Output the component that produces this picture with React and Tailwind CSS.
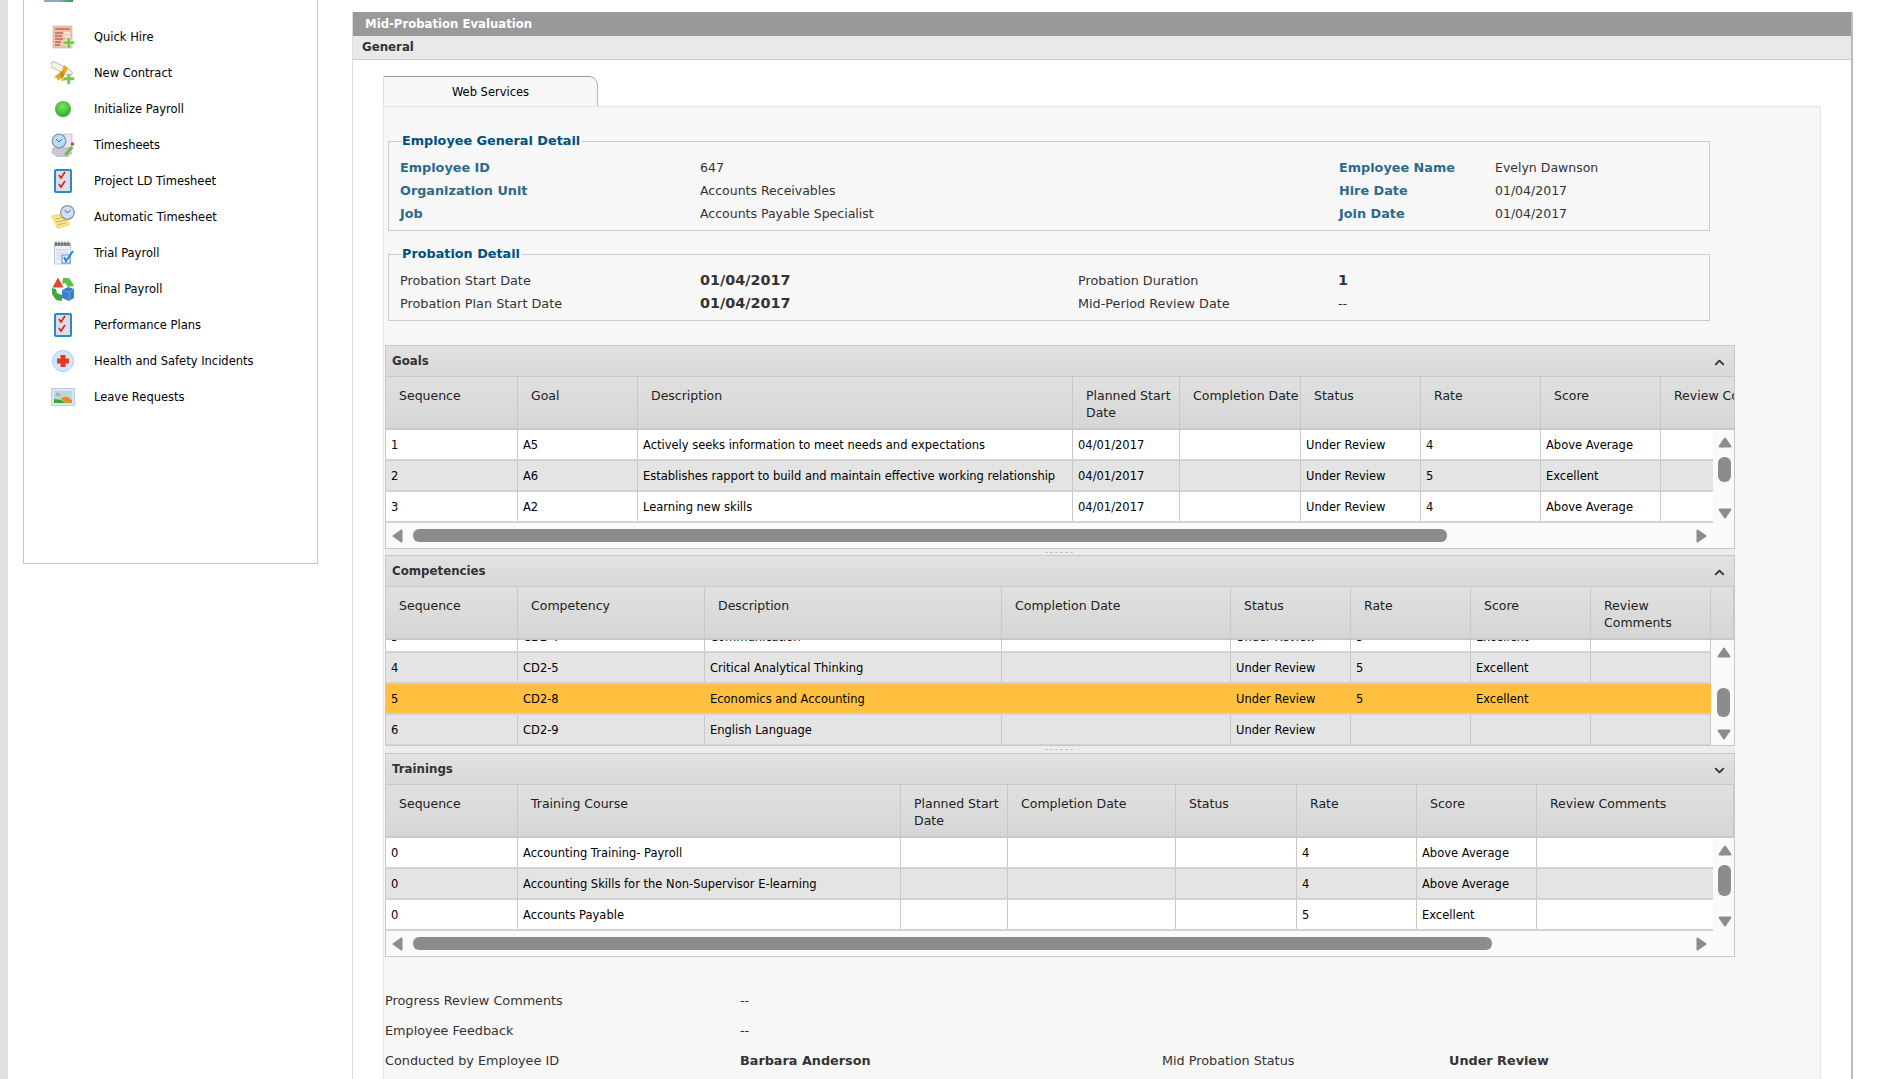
import { ChevronUp, ChevronDown } from "lucide-react"

const menu = [
  ["Quick Hire", "hire"],
  ["New Contract", "contract"],
  ["Initialize Payroll", "dot"],
  ["Timesheets", "sheets"],
  ["Project LD Timesheet", "check"],
  ["Automatic Timesheet", "auto"],
  ["Trial Payroll", "trial"],
  ["Final Payroll", "final"],
  ["Performance Plans", "check"],
  ["Health and Safety Incidents", "health"],
  ["Leave Requests", "leave"],
]

const Plus = () => (
  <path d="M16 12.5h3.5V16H23.5v3.5H19.5V23.5H16V19.5h-4V16h4z" fill="#74c94c" stroke="#fff" strokeWidth="0.6" />
)

const MenuIcon = ({ name }) => {
  if (name === "hire")
    return (
      <svg width="24" height="24" viewBox="0 0 24 24">
        <rect x="2" y="1" width="19" height="22" fill="#eec3ac" stroke="#cfa893" strokeWidth="0.6" />
        <path d="M4 4h15M4 8h8M4 11h7M4 14h8M4 17h6M4 20h5" stroke="#a8322a" strokeWidth="1" />
        <path d="M13 8h6M13 11h6" stroke="#fff" strokeWidth="1" />
        <Plus />
      </svg>
    )
  if (name === "contract")
    return (
      <svg width="24" height="24" viewBox="0 0 24 24">
        <path d="M3 4l15 8" stroke="#a9a595" strokeWidth="7" strokeLinecap="round" />
        <path d="M3 4l15 8" stroke="#f6f3e8" strokeWidth="5.5" strokeLinecap="round" />
        <path d="M13 4l-2 6-8 6 3 1 1 3 7-7 3-6z" fill="#e0a916" />
        <path d="M9 11l2 9 3 0-2-10z" fill="#c48d0c" />
        <Plus />
      </svg>
    )
  if (name === "dot")
    return (
      <svg width="24" height="24" viewBox="0 0 24 24">
        <defs>
          <radialGradient id="dot-g" cx="0.45" cy="0.35" r="0.7">
            <stop offset="0" stopColor="#7fe36a" />
            <stop offset="1" stopColor="#27a81f" />
          </radialGradient>
        </defs>
        <circle cx="12" cy="12" r="8" fill="url(#dot-g)" />
      </svg>
    )
  if (name === "sheets")
    return (
      <svg width="24" height="24" viewBox="0 0 24 24">
        <path d="M2 15h16l3 5-4 3.5H6L1 20z" fill="#c9c9d6" stroke="#9a9ab0" strokeWidth="0.5" />
        <path d="M12 1h9v14h-9z" fill="#e6e6ee" stroke="#a5a5bd" strokeWidth="0.6" />
        <circle cx="8" cy="8" r="6.8" fill="#bcdcf5" stroke="#8d95b5" strokeWidth="1.3" />
        <path d="M5 6l3 3 3-3" fill="none" stroke="#5a6a90" strokeWidth="1" />
        <path d="M13 21l7-8 2.5 2-7 8z" fill="#76b84a" />
        <circle cx="21.5" cy="11" r="1.8" fill="#d8473a" />
      </svg>
    )
  if (name === "check")
    return (
      <svg width="24" height="24" viewBox="0 0 24 24">
        <rect x="4" y="1" width="16" height="22" rx="1" fill="#dedede" stroke="#2d86d0" strokeWidth="2" />
        <path d="M8 6l2 3 4-6M8 15l2 3 4-6" fill="none" stroke="#c9261c" strokeWidth="1.6" />
      </svg>
    )
  if (name === "auto")
    return (
      <svg width="24" height="24" viewBox="0 0 24 24">
        <path d="M0.5 11l14-3 4 12-12 3.5z" fill="#f6e58c" stroke="#d9c35a" strokeWidth="0.5" />
        <path d="M4 14l10-2M5 17l10-2M6 20l9-2" stroke="#c6a93a" strokeWidth="0.8" />
        <circle cx="16.5" cy="7.5" r="6.8" fill="#cfe0f3" stroke="#8d95a8" strokeWidth="1.3" />
        <path d="M13.5 5l3 3 3-3" fill="none" stroke="#4c5a78" strokeWidth="1" />
      </svg>
    )
  if (name === "trial")
    return (
      <svg width="24" height="24" viewBox="0 0 24 24">
        <rect x="3.5" y="2" width="16" height="21" fill="#eef1fa" stroke="#a9b2cc" strokeWidth="0.7" />
        <path d="M3.5 2h16v3h-16z" fill="#9a9a9a" />
        <path d="M5 9h12M5 12h12M5 15h8M5 18h8" stroke="#b9c4e2" strokeWidth="0.8" />
        <path d="M5 0.5v4M8 0.5v4M11 0.5v4M14 0.5v4M17 0.5v4" stroke="#444" strokeWidth="0.9" />
        <rect x="11" y="14" width="8" height="8" fill="#fff" stroke="#2a75c9" strokeWidth="0.8" />
        <path d="M13 16l2 4 7-10" fill="none" stroke="#1f86e0" strokeWidth="2" />
      </svg>
    )
  if (name === "final")
    return (
      <svg width="24" height="24" viewBox="0 0 24 24">
        <path d="M7 0.5l5.5 10H1.5z" fill="#e2462b" />
        <path d="M12 1h6l4 6 1 2-6 1-3-4-3 1z" fill="#5fbf4d" />
        <path d="M1 11l4 1 1 4 5 2v6l-6-1-4-6z" fill="#3fa83c" />
        <path d="M11 13l6-3 6 2v9l-5 3-7-3z" fill="#3d7fcb" />
        <path d="M11 13l7 2.5 5-3.5M18 15.5v8" fill="none" stroke="#7cb0e8" strokeWidth="0.7" />
      </svg>
    )
  if (name === "health")
    return (
      <svg width="24" height="24" viewBox="0 0 24 24">
        <circle cx="12" cy="12" r="10.5" fill="#cfe6fb" stroke="#a8cdf0" strokeWidth="1" />
        <path d="M9.5 6h5v3.5H18v5h-3.5V18h-5v-3.5H6v-5h3.5z" fill="#e8391f" />
      </svg>
    )
  return (
    <svg width="24" height="24" viewBox="0 0 24 24">
      <rect x="0.5" y="3.5" width="23" height="17" fill="#dbe5f5" stroke="#bcd0ea" />
      <rect x="3" y="6" width="18" height="12" fill="#bcd7d9" />
      <path d="M3 14l7 1 5 3H3z" fill="#3fa52c" />
      <path d="M10 14c2-3 7-3 9 0l2 1v3h-5z" fill="#e88a27" />
      <path d="M5 8l5 2M5 10l3 1" stroke="#777" strokeWidth="0.6" />
    </svg>
  )
}

const Triangle = ({ dir }) => {
  if (dir === "up")
    return (
      <svg width="14" height="11" viewBox="0 0 14 11" className="shrink-0">
        <path d="M7 1.5L12.5 9.5H1.5z" fill="#8c8c8c" stroke="#8c8c8c" strokeWidth="2" strokeLinejoin="round" />
      </svg>
    )
  if (dir === "down")
    return (
      <svg width="14" height="11" viewBox="0 0 14 11" className="shrink-0">
        <path d="M7 9.5L12.5 1.5H1.5z" fill="#8c8c8c" stroke="#8c8c8c" strokeWidth="2" strokeLinejoin="round" />
      </svg>
    )
  if (dir === "left")
    return (
      <svg width="11" height="14" viewBox="0 0 11 14" className="shrink-0">
        <path d="M1.5 7L9.5 1.5V12.5z" fill="#8c8c8c" stroke="#8c8c8c" strokeWidth="2" strokeLinejoin="round" />
      </svg>
    )
  return (
    <svg width="11" height="14" viewBox="0 0 11 14" className="shrink-0">
      <path d="M9.5 7L1.5 1.5V12.5z" fill="#8c8c8c" stroke="#8c8c8c" strokeWidth="2" strokeLinejoin="round" />
    </svg>
  )
}

const GridHeader = ({ cols, labels }) => (
  <div className={`grid h-[53px] overflow-hidden border-b-2 border-[#c8c8c8] bg-gradient-to-b from-[#e0e0e0] to-[#d6d6d6] text-[12.5px] text-[#222] leading-[17px] ${cols}`}>
    {labels.map((label, i) => (
      <div key={i} className="whitespace-nowrap border-r border-[#c8c8c8] pl-[13px] pt-[10px]">
        {label}
      </div>
    ))}
  </div>
)

const GridRows = ({ cols, rows, selected }) => (
  <div className="text-[11.5px] text-black">
    {rows.map((row, r) => (
      <div
        key={r}
        className={`grid h-[31px] border-b-2 border-[#d2d2d2] ${cols} ${
          r === selected ? "bg-[#ffbf3f]" : r % 2 ? "bg-[#e4e4e4]" : "bg-white"
        }`}
      >
        {row.map((cell, i) => (
          <div key={i} className={`flex items-center overflow-hidden whitespace-nowrap border-r pl-[5px] pt-[2px] ${r === selected ? "border-transparent" : "border-[#c8c8c8]"}`}>
            {cell}
          </div>
        ))}
      </div>
    ))}
  </div>
)

const VScroll = ({ upGap, thumb, downGap }) => (
  <div className="flex flex-1 flex-col items-center bg-[#fafafa] pl-[2px]">
    <div className={upGap}><Triangle dir="up" /></div>
    <div className={`w-[13px] shrink-0 rounded-[6px] bg-[#8c8c8c] ${thumb}`} />
    <div className={downGap}><Triangle dir="down" /></div>
  </div>
)

const HScroll = ({ thumb }) => (
  <div className="flex h-[23px] items-center bg-[#fafafa] pb-[2px] pl-[6px] pr-[27px]">
    <Triangle dir="left" />
    <div className={`ml-[10px] h-[13px] rounded-[6px] bg-[#8c8c8c] ${thumb}`} />
    <div className="ml-auto"><Triangle dir="right" /></div>
  </div>
)

const PanelHead = ({ title, open }) => (
  <div className="flex h-[31px] items-center justify-between border-b border-[#c8c8c8] bg-gradient-to-b from-[#e2e2e2] to-[#d8d8d8] pl-[6px] pr-[7px] pt-[2px]">
    <span className="text-[11.8px] font-bold text-[#333]">{title}</span>
    {open ? <ChevronUp size={15} strokeWidth={3} className="text-[#333]" /> : <ChevronDown size={15} strokeWidth={3} className="text-[#333]" />}
  </div>
)

const Splitter = ({ h }) => (
  <div className={`flex w-[1350px] items-center justify-center bg-[#ececec] pr-[3px] ${h}`}>
    <div className="h-0 w-[28px] border-t border-dashed border-[#c4c4c4]" />
  </div>
)

const goalCols = "grid-cols-[132px_120px_435px_107px_121px_120px_120px_120px_120px]"
const compCols = "grid-cols-[132px_187px_297px_229px_120px_120px_120px_120px_1fr]"
const trainCols = "grid-cols-[132px_383px_107px_168px_121px_120px_120px_197px]"

const plannedStart = <>Planned Start<br />Date</>

const goalRows = [
  ["1", "A5", "Actively seeks information to meet needs and expectations", "04/01/2017", "", "Under Review", "4", "Above Average", ""],
  ["2", "A6", "Establishes rapport to build and maintain effective working relationship", "04/01/2017", "", "Under Review", "5", "Excellent", ""],
  ["3", "A2", "Learning new skills", "04/01/2017", "", "Under Review", "4", "Above Average", ""],
]

const compRows = [
  ["3", "CD2-4", "Communication", "", "Under Review", "5", "Excellent", ""],
  ["4", "CD2-5", "Critical Analytical Thinking", "", "Under Review", "5", "Excellent", ""],
  ["5", "CD2-8", "Economics and Accounting", "", "Under Review", "5", "Excellent", ""],
  ["6", "CD2-9", "English Language", "", "Under Review", "", "", ""],
]

const trainRows = [
  ["0", "Accounting Training- Payroll", "", "", "", "4", "Above Average", ""],
  ["0", "Accounting Skills for the Non-Supervisor E-learning", "", "", "", "4", "Above Average", ""],
  ["0", "Accounts Payable", "", "", "", "5", "Excellent", ""],
]

const blueLabel = "text-[12.8px] font-bold text-[#2d6a8a]"
const legend = "ml-[2px] h-[20px] pr-[2px] text-[12.8px] font-bold leading-[20px] text-[#00507f]"

export default function App() {
  return (
    <div className="flex h-[1079px] w-[1891px] overflow-hidden bg-white font-['DejaVu_Sans',sans-serif] text-[#333]">
      <div className="w-[8px] shrink-0 bg-[#e0e0e0]" />

      <aside className="ml-[15px] h-[564px] w-[295px] shrink-0 border-x border-b border-[#c8c8c8]">
        <div className="ml-[20px] h-[2px] w-[29px] bg-gradient-to-r from-[#8fa5c4] via-[#8fa5c4] to-[#2c9c3c]" />
        <ul className="pt-[17px]">
          {menu.map(([label, icon]) => (
            <li key={label} className="flex h-[36px] items-center gap-[19px] pl-[27px] text-[11.5px] text-black">
              <MenuIcon name={icon} />
              <span className="pt-[1px]">{label}</span>
            </li>
          ))}
        </ul>
      </aside>

      <main className="ml-[34px] mt-[12px] w-[1501px] shrink-0 border-l border-r-2 border-l-[#ddd] border-r-[#bbb]">
        <div className="flex h-[24px] items-center bg-[#999] pl-[12px] pt-[1px] text-[11.7px] font-bold text-white">Mid-Probation Evaluation</div>
        <div className="flex h-[24px] items-center border-b border-[#ccc] bg-[#e9e9e9] pl-[9px] pt-[1px] text-[11.8px] font-bold text-[#333]">General</div>

        <div className="pl-[30px] pt-[16px]">
          <div className="flex h-[30px] w-[215px] items-center justify-center rounded-tr-[9px] border-x border-t border-x-[#b5b5b5] border-t-[#999] border-l-[#ddd] bg-[#f7f7f7] pt-[2px] text-[11.5px] text-black">
            Web Services
          </div>

          <div className="h-[1000px] w-[1438px] border border-[#e6e6e6] bg-[#f7f7f7]">
            <div className="pl-[4px] pt-[24px]">
              <fieldset className="w-[1322px] border border-[#ccc] pb-[5px] pl-[11px]">
                <legend className={legend}>Employee General Detail</legend>
                <div className="grid grid-cols-[300px_639px_156px_1fr] pt-[5px] text-[12.5px] leading-[23px]">
                  <div className={blueLabel}>Employee ID</div>
                  <div>647</div>
                  <div className={blueLabel}>Employee Name</div>
                  <div>Evelyn Dawnson</div>
                  <div className={blueLabel}>Organization Unit</div>
                  <div>Accounts Receivables</div>
                  <div className={blueLabel}>Hire Date</div>
                  <div>01/04/2017</div>
                  <div className={blueLabel}>Job</div>
                  <div>Accounts Payable Specialist</div>
                  <div className={blueLabel}>Join Date</div>
                  <div>01/04/2017</div>
                </div>
              </fieldset>

              <fieldset className="mt-[13px] w-[1322px] border border-[#ccc] pb-[5px] pl-[11px]">
                <legend className={legend}>Probation Detail</legend>
                <div className="grid grid-cols-[300px_378px_260px_1fr] pt-[5px] text-[12.8px] leading-[23px]">
                  <div>Probation Start Date</div>
                  <div className="text-[14.4px] font-bold">01/04/2017</div>
                  <div>Probation Duration</div>
                  <div className="text-[14.4px] font-bold">1</div>
                  <div>Probation Plan Start Date</div>
                  <div className="text-[14.4px] font-bold">01/04/2017</div>
                  <div>Mid-Period Review Date</div>
                  <div>--</div>
                </div>
              </fieldset>
            </div>

            <div className="ml-[1px] mt-[24px]">
              <section className="w-[1350px] border border-[#c8c8c8] bg-[#fafafa]">
                <PanelHead title="Goals" open />
                <GridHeader cols={goalCols} labels={["Sequence", "Goal", "Description", plannedStart, "Completion Date", "Status", "Rate", "Score", "Review Comments"]} />
                <div className="flex h-[95px]">
                  <div className="w-[1327px] overflow-hidden">
                    <GridRows cols={goalCols} rows={goalRows} />
                  </div>
                  <VScroll upGap="mt-[7px]" thumb="mt-[9px] h-[25px]" downGap="mt-[26px]" />
                </div>
                <HScroll thumb="w-[1034px]" />
              </section>

              <Splitter h="h-[6px]" />

              <section className="w-[1350px] border border-[#c8c8c8] bg-[#fafafa]">
                <PanelHead title="Competencies" open />
                <GridHeader cols={compCols} labels={["Sequence", "Competency", "Description", "Completion Date", "Status", "Rate", "Score", <>Review<br />Comments</>, ""]} />
                <div className="flex h-[105px]">
                  <div className="w-[1325px] overflow-hidden">
                    <div className="-mt-[18px]">
                      <GridRows cols={compCols} rows={compRows} selected={2} />
                    </div>
                  </div>
                  <VScroll upGap="mt-[7px]" thumb="mt-[30px] h-[29px]" downGap="mt-[12px]" />
                </div>
              </section>

              <Splitter h="h-[7px]" />

              <section className="w-[1350px] border border-[#c8c8c8] bg-[#fafafa]">
                <PanelHead title="Trainings" />
                <GridHeader cols={trainCols} labels={["Sequence", "Training Course", plannedStart, "Completion Date", "Status", "Rate", "Score", "Review Comments"]} />
                <div className="flex h-[95px]">
                  <div className="w-[1327px] overflow-hidden">
                    <GridRows cols={trainCols} rows={trainRows} />
                  </div>
                  <VScroll upGap="mt-[7px]" thumb="mt-[9px] h-[31px]" downGap="mt-[20px]" />
                </div>
                <HScroll thumb="w-[1079px]" />
              </section>

              <div className="mt-[29px] grid grid-cols-[355px_422px_287px_1fr] text-[12.8px] leading-[30px]">
                <div>Progress Review Comments</div>
                <div className="col-span-3">--</div>
                <div>Employee Feedback</div>
                <div className="col-span-3">--</div>
                <div>Conducted by Employee ID</div>
                <div className="font-bold">Barbara Anderson</div>
                <div>Mid Probation Status</div>
                <div className="font-bold">Under Review</div>
              </div>
            </div>
          </div>
        </div>
      </main>
    </div>
  )
}
